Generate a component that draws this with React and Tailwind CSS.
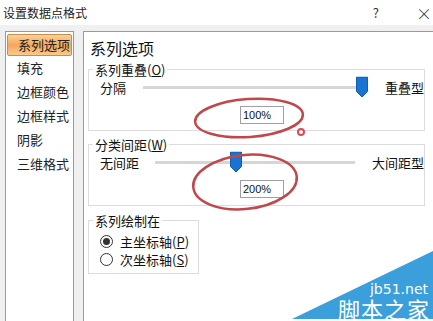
import React from "react";

const font = { fontFamily: '"Noto Sans CJK SC", "Noto Sans", sans-serif' };

function Thumb() {
  return (
    <svg width="12" height="21" viewBox="0 0 12 21" className="absolute top-1/2 -translate-y-1/2">
      <path d="M0.5 0.5 H11.5 V15 L6 20.5 L0.5 15 Z" fill="#1874d0" stroke="#0f5fb0" strokeWidth="1" />
    </svg>
  );
}

function Slider({ width, pos }) {
  return (
    <div className="relative h-[21px] shrink-0" style={{ width }}>
      <div className="absolute left-0 right-0 top-[9px] h-[3px] bg-[#d6d6d6]" />
      <div className="absolute top-[10px]" style={{ left: pos }}>
        <Thumb />
      </div>
    </div>
  );
}

function Radio({ checked, label, k }) {
  return (
    <div className="flex items-center h-[18px]">
      <span className="w-[13px] h-[13px] rounded-full border border-[#333] flex items-center justify-center bg-white">
        {checked && <span className="w-[7px] h-[7px] rounded-full bg-[#333]" />}
      </span>
      <span className="ml-[7px] text-[13px] text-[#111] leading-none whitespace-nowrap">
        {label}(<span className="underline">{k}</span>)
      </span>
    </div>
  );
}

const mono = { fontFamily: '"Liberation Sans", Arial, sans-serif' };

export default function App() {
  const items = ["填充", "边框颜色", "边框样式", "阴影", "三维格式"];
  return (
    <div className="relative w-[433px] h-[321px] overflow-hidden bg-[#f0f0f0] text-[#111]" style={font}>
      {/* title bar */}
      <div className="h-[25px] bg-white flex items-center">
        <span className="ml-[3px] text-[12px] text-[#222]">设置数据点格式</span>
        <span className="ml-auto text-[13px] text-[#333]">?</span>
        <span className="ml-[37px] mr-[1px] text-[16px] text-[#333] font-light">×</span>
      </div>
      <div className="flex pt-[6px]">
        {/* left nav */}
        <div className="ml-[5px] w-[69px] h-[300px] bg-white border border-[#9a9a9a] pt-[2px] px-[1px]">
          <div className="h-[22px] rounded-[2px] border border-[#c98c4a] bg-gradient-to-b from-[#fbd29a] via-[#f5a65a] to-[#f9c98b] flex items-center pl-[10px] text-[13px] text-[#222]">
            系列选项
          </div>
          {items.map((t) => (
            <div key={t} className="h-[24px] flex items-center pl-[10px] text-[13px] text-[#222]">
              {t}
            </div>
          ))}
        </div>
        {/* main panel */}
        <div className="ml-[9px] flex-1 h-[300px] bg-white border border-r-0 border-[#9a9a9a] pl-[4px]">
          <div className="pl-[2px] pt-[5px] text-[16px] leading-[22px] text-[#111]">系列选项</div>
          <fieldset className="mt-[3px] w-[335px] border border-[#dcdcdc] px-0 pb-[6px]">
            <legend className="ml-[4px] px-[2px] text-[13px] leading-[15px] text-[#111]">
              系列重叠(<span className="underline">O</span>)
            </legend>
            <div className="flex items-center">
              <span className="ml-[11px] w-[43px] text-[13px] whitespace-nowrap">分隔</span>
              <Slider width={219} pos={213} />
              <span className="ml-[23px] text-[13px] whitespace-nowrap">重叠型</span>
            </div>
            <div className="ml-[151px] mt-[8px] w-[44px] h-[18px] border border-[#a0a0a0] text-[11px] leading-[16px] pl-[2px]" style={mono}>
              100%
            </div>
          </fieldset>
          <fieldset className="mt-[6px] w-[335px] border border-[#dcdcdc] px-0 pb-[7px]">
            <legend className="ml-[4px] px-[2px] text-[13px] leading-[15px] text-[#111]">
              分类间距(<span className="underline">W</span>)
            </legend>
            <div className="flex items-center">
              <span className="ml-[11px] w-[55px] text-[13px] whitespace-nowrap">无间距</span>
              <Slider width={200} pos={75} />
              <span className="ml-[17px] text-[13px] whitespace-nowrap">大间距型</span>
            </div>
            <div className="ml-[151px] mt-[7px] w-[44px] h-[18px] border border-[#a0a0a0] text-[11px] leading-[16px] pl-[2px]" style={mono}>
              200%
            </div>
          </fieldset>
          <fieldset className="mt-[7px] w-[111px] border border-[#dcdcdc] px-0 pb-[5px]">
            <legend className="ml-[4px] px-[2px] text-[13px] leading-[15px] text-[#111]">系列绘制在</legend>
            <div className="ml-[11px] mt-[4px] flex flex-col">
              <Radio checked label="主坐标轴" k="P" />
              <Radio label="次坐标轴" k="S" />
            </div>
          </fieldset>
        </div>
      </div>

      {/* red annotation ellipses */}
      <svg className="absolute left-0 top-0 pointer-events-none" width="433" height="321">
        <ellipse cx="249" cy="118" rx="54" ry="19" fill="none" stroke="#c0484c" strokeWidth="2.5" transform="rotate(-4 249 118)" />
        <circle cx="301" cy="132" r="3" fill="none" stroke="#e04a55" strokeWidth="2" />
        <ellipse cx="245" cy="182" rx="52" ry="27" fill="none" stroke="#c0484c" strokeWidth="2.5" transform="rotate(-6 245 182)" />
      </svg>

      {/* watermark */}
      <svg className="absolute left-0 top-0 pointer-events-none" width="433" height="321">
        <polygon points="292,319 433,251 433,319" fill="#3a9fdb" />
      </svg>
      <div className="absolute right-[5px] top-[282px] text-[14px] leading-[14px] text-white" style={{ fontFamily: '"DejaVu Sans", sans-serif' }}>
        jb51.net
      </div>
      <div className="absolute right-[3px] top-[297px] text-[22px] leading-[22px] text-white tracking-[1px]" style={font}>
        脚本之家
      </div>
    </div>
  );
}
